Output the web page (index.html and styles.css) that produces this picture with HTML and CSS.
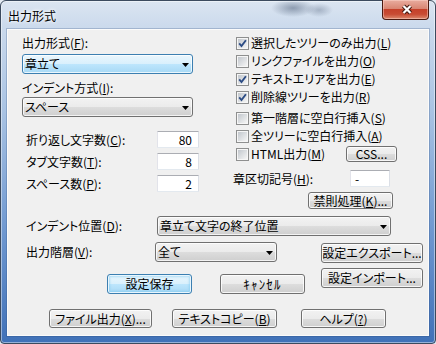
FILE: index.html
```html
<!DOCTYPE html>
<html lang="ja">

<head>
    <meta charset="utf-8">
    <title>出力形式</title>
    <link rel="stylesheet" href="styles.css">
</head>

<body>
    <!-- shared glyphs: checkbox states and dropdown arrow -->
    <svg class="svg-defs" xmlns="http://www.w3.org/2000/svg">
        <defs>
            <linearGradient id="check-inner" x1="0" y1="0" x2="1" y2="1">
                <stop offset="0" stop-color="#c2c7cd" />
                <stop offset="1" stop-color="#f5f5f5" />
            </linearGradient>
            <symbol id="check-off" viewBox="0 0 13 13">
                <rect x="0.5" y="0.5" width="12" height="12" fill="#f6f6f6" stroke="#8e8f8f" />
                <rect x="2" y="2" width="9" height="9" fill="url(#check-inner)" />
            </symbol>
            <symbol id="check-on" viewBox="0 0 13 13">
                <use href="#check-off" />
                <path d="M3.2 6.3l2.3 2.7 4.4-5.8" fill="none" stroke="#2c4c84" stroke-width="1.9" />
            </symbol>
            <symbol id="drop" viewBox="0 0 7 4">
                <path d="M0 0h7l-3.5 4z" />
            </symbol>
        </defs>
    </svg>

    <div class="window">
        <div class="titlebar">
            <div class="title">出力形式</div>
            <div class="close-btn">
                <svg class="close-x" viewBox="0 0 12 11">
                    <path d="M2.5 2l7 7M9.5 2l-7 7" stroke="#3f170e" stroke-width="4.2" />
                    <path d="M2.5 2l7 7M9.5 2l-7 7" stroke="#ffffff" stroke-width="2.2" />
                </svg>
            </div>
        </div>

        <div class="client">
            <div class="upper">
                <div class="left-col">
                    <div class="field-label">出力形式(<u>F</u>):</div>
                    <div class="combo focused">
                        <span>章立て</span>
                        <svg class="drop"><use href="#drop" /></svg>
                    </div>
                    <div class="field-label second">インデント方式(<u>I</u>):</div>
                    <div class="combo narrow-gap">
                        <span>スペース</span>
                        <svg class="drop"><use href="#drop" /></svg>
                    </div>

                    <div class="num-rows">
                        <div class="num-row">
                            <span>折り返し文字数(<u>C</u>):</span>
                            <div class="edit num">80</div>
                        </div>
                        <div class="num-row">
                            <span>タブ文字数(<u>T</u>):</span>
                            <div class="edit num">8</div>
                        </div>
                        <div class="num-row">
                            <span>スペース数(<u>P</u>):</span>
                            <div class="edit num">2</div>
                        </div>
                    </div>
                </div>

                <div class="right-col">
                    <div class="check-group">
                        <div class="check-row">
                            <svg class="check"><use href="#check-on" /></svg>
                            <span>選択したツリーのみ出力(<u>L</u>)</span>
                        </div>
                        <div class="check-row">
                            <svg class="check"><use href="#check-off" /></svg>
                            <span>リンクファイルを出力(<u>O</u>)</span>
                        </div>
                        <div class="check-row">
                            <svg class="check"><use href="#check-on" /></svg>
                            <span>テキストエリアを出力(<u>E</u>)</span>
                        </div>
                        <div class="check-row">
                            <svg class="check"><use href="#check-on" /></svg>
                            <span>削除線ツリーを出力(<u>R</u>)</span>
                        </div>
                    </div>

                    <div class="check-group second">
                        <div class="check-row">
                            <svg class="check"><use href="#check-off" /></svg>
                            <span>第一階層に空白行挿入(<u>S</u>)</span>
                        </div>
                        <div class="check-row">
                            <svg class="check"><use href="#check-off" /></svg>
                            <span>全ツリーに空白行挿入(<u>A</u>)</span>
                        </div>
                        <div class="check-row">
                            <svg class="check"><use href="#check-off" /></svg>
                            <span>HTML出力(<u>M</u>)</span>
                            <button class="btn css-btn">CSS...</button>
                        </div>
                    </div>

                    <div class="sep-row">
                        <span>章区切記号(<u>H</u>):</span>
                        <div class="edit sep">-</div>
                    </div>
                    <div class="kinsoku-row">
                        <button class="btn kinsoku-btn">禁則処理(<u>K</u>)...</button>
                    </div>
                </div>
            </div>

            <div class="indent-row">
                <span class="indent-label">インデント位置(<u>D</u>):</span>
                <div class="combo indent-combo">
                    <span>章立て文字の終了位置</span>
                    <svg class="drop"><use href="#drop" /></svg>
                </div>
            </div>

            <div class="lower">
                <div class="lower-main">
                    <div class="level-row">
                        <span class="level-label">出力階層(<u>V</u>):</span>
                        <div class="combo level-combo">
                            <span>全て</span>
                            <svg class="drop"><use href="#drop" /></svg>
                        </div>
                    </div>
                    <div class="action-row">
                        <button class="btn default save-btn">設定保存</button>
                        <button class="btn cancel-btn">ｷｬﾝｾﾙ</button>
                    </div>
                </div>
                <div class="lower-side">
                    <button class="btn side-btn">設定エクスポート...</button>
                    <button class="btn side-btn import">設定インポート...</button>
                </div>
            </div>

            <div class="bottom-row">
                <button class="btn file-btn">ファイル出力(<u>X</u>)...</button>
                <button class="btn copy-btn">テキストコピー(<u>B</u>)</button>
                <button class="btn help-btn">ヘルプ(<u>?</u>)</button>
            </div>
        </div>
    </div>
</body>

</html>
```

FILE: styles.css
```css
:root {
    --client-bg: #f0f0f0;
    --btn-border: #707070;
    --focus-border: #3c7fb1;
}

body {
    margin: 0;
    background: #e4ebf3;
    font-family: "Noto Sans CJK JP", "Noto Sans", sans-serif;
    font-size: 12px;
    line-height: 16px;
    color: #000;
    font-feature-settings: "palt";
    overflow: hidden;
}

.svg-defs {
    display: block;
    width: 0;
    height: 0;
}

u {
    text-underline-offset: 1px;
}

/* -- Window frame -- */
.window {
    width: 436px;
    height: 344px;
    box-sizing: border-box;
    border: 1px solid #3b4a5e;
    border-radius: 6px 6px 4px 4px;
    display: flex;
    flex-direction: column;
    background:
        radial-gradient(ellipse 22px 9px at 292px 7px, rgba(52, 70, 98, 0.45), transparent),
        radial-gradient(ellipse 14px 7px at 318px 9px, rgba(52, 70, 98, 0.3), transparent),
        linear-gradient(#dbe5f1 0px, #cad9ec 28px, #a9c3e3 110px, #6f98d0 230px, #3f70b7 344px);
    box-shadow: inset 0 0 0 1px rgba(255, 255, 255, 0.45);
}

.titlebar {
    height: 28px;
    display: flex;
    align-items: flex-start;
    padding: 0 6px 0 7px;
}

.title {
    padding-top: 7px;
    text-shadow: 0 0 5px #fff, 0 0 3px #fff;
}

.close-btn {
    margin-left: auto;
    margin-top: -1px;
    width: 47px;
    height: 20px;
    box-sizing: border-box;
    border: 1px solid #4a1a10;
    border-top: none;
    border-radius: 0 0 4px 4px;
    background: linear-gradient(#e9ad9f 0%, #d98673 45%, #c5412a 50%, #c84b33 75%, #dc8a6e 100%);
    box-shadow: inset 0 0 0 1px rgba(255, 220, 210, 0.45);
    display: flex;
    align-items: center;
    justify-content: center;
}

.close-x {
    width: 12px;
    height: 11px;
    margin-left: 2px;
}

.client {
    flex: 1;
    margin: 0 6px 7px;
    background: var(--client-bg);
    border: 1px solid rgba(255, 255, 255, 0.7);
    box-shadow: 0 0 0 1px rgba(40, 70, 120, 0.25);
}

/* -- Upper two columns -- */
.upper {
    display: flex;
    padding-left: 14px;
}

.left-col {
    width: 177px;
    padding-top: 5px;
}

.field-label {
    height: 16px;
}

.field-label.second {
    margin-top: 6px;
}

.combo {
    box-sizing: border-box;
    height: 20px;
    width: 171px;
    margin-top: 3px;
    padding: 0 3px 0 2px;
    display: flex;
    align-items: center;
    justify-content: space-between;
    border: 1px solid var(--btn-border);
    border-radius: 3px;
    background: linear-gradient(#f2f2f2 0%, #ebebeb 50%, #dddddd 50%, #cfcfcf 100%);
    box-shadow: inset 0 0 0 1px rgba(255, 255, 255, 0.75);
}

.combo.focused {
    border-color: var(--focus-border);
    background: linear-gradient(#eaf6fd 0%, #d9f0fc 50%, #bee6fd 50%, #a7d9f5 100%);
}

.combo.narrow-gap {
    margin-top: 1px;
}

.drop {
    width: 7px;
    height: 4px;
    margin-top: 2px;
    fill: #000;
}

.num-rows {
    margin-top: 14px;
    display: flex;
    flex-direction: column;
    gap: 5px;
}

.num-row {
    height: 17px;
    display: flex;
    align-items: center;
    justify-content: space-between;
    padding-left: 4px;
}

.edit {
    box-sizing: border-box;
    height: 17px;
    background: #fff;
    border: 1px solid;
    border-color: #abadb3 #dbdfe6 #e3e9ef #e2e3ea;
    border-radius: 1px;
    line-height: 15px;
}

.edit.num {
    width: 42px;
    text-align: right;
    padding-right: 6px;
}

.right-col {
    margin-left: 34px;
    width: 190px;
    padding-top: 4px;
}

.check-group.second {
    margin-top: 3px;
}

.check-row {
    height: 18px;
    display: flex;
    align-items: center;
    padding-left: 3px;
    white-space: nowrap;
}

.check {
    width: 13px;
    height: 13px;
    flex: none;
    margin-right: 2px;
}

.btn {
    box-sizing: border-box;
    height: 20px;
    padding: 0;
    margin: 0;
    font: inherit;
    color: #000;
    display: flex;
    align-items: center;
    justify-content: center;
    white-space: nowrap;
    border: 1px solid var(--btn-border);
    border-radius: 3px;
    background: linear-gradient(#f2f2f2 0%, #ebebeb 50%, #dddddd 50%, #cfcfcf 100%);
    box-shadow: inset 0 0 0 1px rgba(255, 255, 255, 0.8);
}

.btn.default {
    border-color: var(--focus-border);
    background: linear-gradient(#eaf6fd 0%, #d9f0fc 50%, #bee6fd 50%, #a7d9f5 100%);
    box-shadow: inset 0 0 0 1px #e8f6fe, inset 0 0 2px 2px rgba(120, 200, 240, 0.5);
}

.css-btn {
    width: 51px;
    height: 16px;
    margin-left: auto;
    margin-right: 26px;
}

.sep-row {
    margin-top: 7px;
    height: 17px;
    display: flex;
    align-items: center;
}

.sep-row span {
    width: 117px;
}

.edit.sep {
    width: 40px;
    padding-left: 4px;
}

.kinsoku-row {
    margin-top: 5px;
    display: flex;
}

.kinsoku-btn {
    width: 85px;
    height: 17px;
    margin-left: 75px;
}

/* -- Lower rows -- */
.indent-row {
    margin-top: 7px;
    padding-left: 18px;
    height: 20px;
    display: flex;
    align-items: center;
}

.indent-label {
    width: 131px;
}

.indent-combo,
.level-combo {
    margin-top: 0;
}

.indent-combo {
    width: 234px;
}

.lower {
    margin-top: 6px;
    display: flex;
}

.lower-main {
    padding-left: 18px;
}

.level-row {
    height: 20px;
    display: flex;
    align-items: center;
}

.level-label {
    width: 129px;
}

.level-combo {
    width: 122px;
}

.action-row {
    margin-top: 12px;
    display: flex;
    gap: 28px;
    padding-left: 81px;
}

.save-btn,
.cancel-btn {
    width: 85px;
}

/* half-width kana keep their full advance, no proportional squeeze */
.cancel-btn {
    font-feature-settings: normal;
    font-size: 13px;
    letter-spacing: 1.2px;
}

.lower-side {
    margin-left: auto;
    margin-right: 5px;
    width: 102px;
    padding-top: 1px;
}

.side-btn {
    width: 102px;
}

.side-btn.import {
    margin-top: 5px;
}

.bottom-row {
    margin-top: 15px;
    padding-left: 41px;
    display: flex;
}

.bottom-row .btn {
    height: 19px;
}

.file-btn {
    width: 103px;
}

.copy-btn {
    width: 105px;
    margin-left: 20px;
}

.help-btn {
    width: 85px;
    margin-left: 24px;
}
```
